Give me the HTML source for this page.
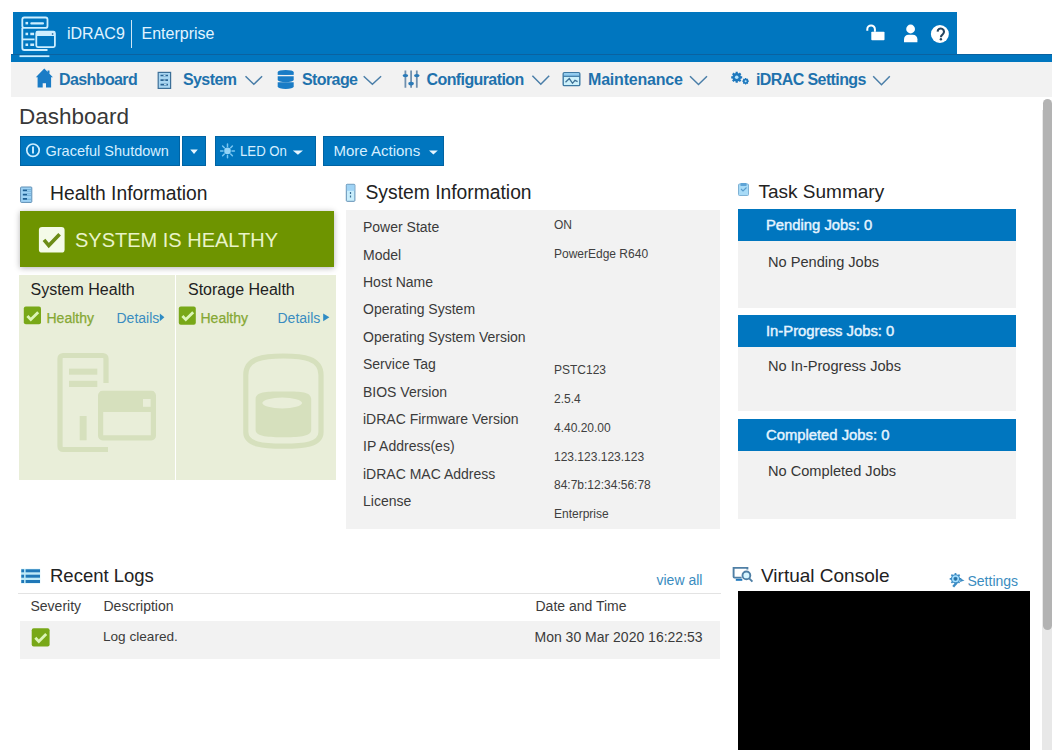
<!DOCTYPE html>
<html><head><meta charset="utf-8">
<style>
*{box-sizing:border-box}
html,body{margin:0;padding:0;width:1061px;height:754px;overflow:hidden;background:#fff;font-family:"Liberation Sans",sans-serif;color:#333}
.a{position:absolute}
.t{position:absolute;white-space:nowrap;line-height:1}
.hdr{left:13px;top:12px;width:944px;height:43px;background:#0076bf}
.strip{left:11px;top:55px;width:1041px;height:7px;background:#0076bf}
.nav{left:11px;top:62px;width:1041px;height:35px;background:#f2f2f2}
.navt{font-weight:bold;font-size:16px;letter-spacing:-0.6px;color:#1f72ad}
.btn{background:#0076bf;height:30.4px;top:136px;box-shadow:inset 0 0 0 1px rgba(0,50,90,.28)}
.btnt{color:#d6efff;font-size:14.5px}
.sect{font-size:19px;color:#222}
.lbl{font-size:14px;color:#3b3b3b}
.val{font-size:12px;color:#404040}
.jobh{background:#0076bf;height:32px;left:738px;width:278px}
.jobb{background:#f2f2f2;left:738px;width:278px}
.jobht{font-weight:normal;font-size:14.8px;-webkit-text-stroke:0.45px #e4f4ff;color:#e4f4ff;left:766px}
.jobbt{font-size:14.6px;color:#363636;left:768px}
</style></head><body>

<!-- header -->
<div class="a hdr"></div>
<div class="a strip"></div>
<div class="a" style="left:11px;top:54px;width:1041px;height:1px;background:#0a62a0"></div>
<div class="t" style="left:67px;top:25.5px;font-size:16px;color:#e2f4ff">iDRAC9</div>
<div class="a" style="left:131px;top:20px;width:1px;height:28px;background:#cfe6f5"></div>
<div class="t" style="left:141.5px;top:25.5px;font-size:16px;color:#e2f4ff">Enterprise</div>

<!-- nav -->
<div class="a nav"></div>
<div class="t navt" style="left:59px;top:72px">Dashboard</div>
<div class="t navt" style="left:183px;top:72px">System</div>
<div class="t navt" style="left:302px;top:72px">Storage</div>
<div class="t navt" style="left:426.5px;top:72px">Configuration</div>
<div class="t navt" style="left:588px;top:72px;letter-spacing:-0.2px">Maintenance</div>
<div class="t navt" style="left:756px;top:72px">iDRAC Settings</div>

<!-- scrollbar -->
<div class="a" style="left:1042px;top:110px;width:10px;height:640px;background:#e8e8e8"></div>
<div class="a" style="left:1043px;top:99px;width:9px;height:531px;background:#b3b3b3;border-radius:5px"></div>

<!-- title -->
<div class="t" style="left:19px;top:106px;font-size:22.5px;color:#383838">Dashboard</div>

<!-- buttons -->
<div class="a btn" style="left:20px;width:160px"></div>
<div class="a btn" style="left:182px;width:24px"></div>
<div class="a btn" style="left:215px;width:101px"></div>
<div class="a btn" style="left:323px;width:121px"></div>
<div class="t btnt" style="left:45.5px;top:143.7px">Graceful Shutdown</div>
<div class="t btnt" style="left:240px;top:143.5px;font-size:14.5px;transform:scaleX(0.91);transform-origin:0 0">LED On</div>
<div class="t btnt" style="left:333.5px;top:143.3px;font-size:15px">More Actions</div>

<!-- health -->
<div class="t sect" style="left:50px;top:184.3px;font-size:19.3px">Health Information</div>
<div class="a" style="left:19.5px;top:210.5px;width:314px;height:56.3px;background:#6e9400;box-shadow:0 1px 6px rgba(0,0,0,.3)"></div>
<div class="t" style="left:75px;top:230px;font-size:20px;color:#e9f3c8">SYSTEM IS HEALTHY</div>
<div class="a" style="left:19px;top:275px;width:155.8px;height:205px;background:#e9eed9"></div>
<div class="a" style="left:176px;top:275px;width:160px;height:205px;background:#e9eed9"></div>
<div class="t" style="left:30.5px;top:282px;font-size:16px;color:#222">System Health</div>
<div class="t" style="left:188px;top:282px;font-size:16px;color:#222">Storage Health</div>
<div class="t" style="left:46.5px;top:310.8px;font-size:14px;color:#86a834;-webkit-text-stroke:0.25px #86a834">Healthy</div>
<div class="t" style="left:200.5px;top:310.8px;font-size:14px;color:#86a834;-webkit-text-stroke:0.25px #86a834">Healthy</div>
<div class="t" style="left:116.5px;top:310.8px;font-size:14px;color:#3a8cc0">Details</div>
<div class="t" style="left:277.5px;top:310.8px;font-size:14px;color:#3a8cc0">Details</div>

<!-- system info -->
<div class="t sect" style="left:365.5px;top:182.8px;font-size:19.3px">System Information</div>
<div class="a" style="left:346px;top:209.5px;width:374px;height:319px;background:#f2f2f2"></div>
<div class="t lbl" style="left:363px;top:220.1px">Power State</div>
<div class="t lbl" style="left:363px;top:247.5px">Model</div>
<div class="t lbl" style="left:363px;top:274.9px">Host Name</div>
<div class="t lbl" style="left:363px;top:302.3px">Operating System</div>
<div class="t lbl" style="left:363px;top:329.7px">Operating System Version</div>
<div class="t lbl" style="left:363px;top:357.1px">Service Tag</div>
<div class="t lbl" style="left:363px;top:384.5px">BIOS Version</div>
<div class="t lbl" style="left:363px;top:411.9px">iDRAC Firmware Version</div>
<div class="t lbl" style="left:363px;top:439.3px">IP Address(es)</div>
<div class="t lbl" style="left:363px;top:466.7px">iDRAC MAC Address</div>
<div class="t lbl" style="left:363px;top:494.1px">License</div>
<div class="t val" style="left:554px;top:219.3px">ON</div>
<div class="t val" style="left:554px;top:248.2px">PowerEdge R640</div>
<div class="t val" style="left:554px;top:363.8px">PSTC123</div>
<div class="t val" style="left:554px;top:392.7px">2.5.4</div>
<div class="t val" style="left:554px;top:421.6px">4.40.20.00</div>
<div class="t val" style="left:554px;top:450.5px">123.123.123.123</div>
<div class="t val" style="left:554px;top:479.4px">84:7b:12:34:56:78</div>
<div class="t val" style="left:554px;top:508.3px">Enterprise</div>

<!-- task summary -->
<div class="t sect" style="left:758.5px;top:182.3px">Task Summary</div>
<div class="a jobh" style="top:209px"></div>
<div class="a jobb" style="top:241px;height:67px"></div>
<div class="a jobh" style="top:315px"></div>
<div class="a jobb" style="top:347px;height:64px"></div>
<div class="a jobh" style="top:419px"></div>
<div class="a jobb" style="top:451px;height:67.8px"></div>
<div class="t jobht" style="top:218.3px">Pending Jobs: 0</div>
<div class="t jobbt" style="top:254.5px">No Pending Jobs</div>
<div class="t jobht" style="top:323.7px">In-Progress Jobs: 0</div>
<div class="t jobbt" style="top:359px">No In-Progress Jobs</div>
<div class="t jobht" style="top:428px">Completed Jobs: 0</div>
<div class="t jobbt" style="top:464px">No Completed Jobs</div>

<!-- recent logs -->
<div class="t sect" style="left:50px;top:567px;font-size:18.5px">Recent Logs</div>
<div class="t" style="left:656.5px;top:573px;font-size:14px;color:#3a8cc0">view all</div>
<div class="a" style="left:18px;top:593px;width:703px;height:1px;background:#e3e3e3"></div>
<div class="t lbl" style="left:30.5px;top:598.8px">Severity</div>
<div class="t lbl" style="left:103.5px;top:598.8px">Description</div>
<div class="t lbl" style="left:535.5px;top:598.8px">Date and Time</div>
<div class="a" style="left:20px;top:621px;width:700px;height:38px;background:#f2f2f2"></div>
<div class="t lbl" style="left:103px;top:629.5px;font-size:13.6px">Log cleared.</div>
<div class="t lbl" style="left:534.5px;top:629.5px">Mon 30 Mar 2020 16:22:53</div>

<!-- virtual console -->
<div class="t sect" style="left:761px;top:566px">Virtual Console</div>
<div class="t" style="left:967.5px;top:574px;font-size:14px;color:#3a8cc0">Settings</div>
<div class="a" style="left:738px;top:591px;width:291.5px;height:159px;background:#000"></div>

<!-- ICONS -->
<svg class="a" style="left:0;top:0" width="1061" height="754" viewBox="0 0 1061 754">
<!-- header logo -->
<g fill="none" stroke="#cdeeff" stroke-width="1.8">
  <rect x="22.3" y="17.5" width="25.2" height="10.4" rx="2"/>
  <path d="M22.3 27.9 V48 a2 2 0 0 0 2 2 H47.5"/>
  <path d="M22.3 39.4 H34.5"/>
  <rect x="36.3" y="31.7" width="18.6" height="15.4" rx="1.5"/>
  <path d="M19.5 56.2 H49.4"/>
</g>
<g fill="#cdeeff">
  <rect x="25.5" y="21.9" width="2.6" height="2.5"/>
  <rect x="30.3" y="22.2" width="13.7" height="2.2" rx="1"/>
  <rect x="25.5" y="32.7" width="2.6" height="2.5"/>
  <rect x="30.3" y="32.7" width="3.8" height="2.5"/>
  <rect x="25.5" y="43.5" width="2.6" height="2.5"/>
  <rect x="30.3" y="43.5" width="3.8" height="2.5"/>
  <rect x="36.3" y="31.7" width="18.6" height="4.3"/>
</g>
<circle cx="52.6" cy="34" r="0.9" fill="#3a7ab0"/>
<!-- header right icons -->
<g fill="#fff">
  <path d="M867.3 30.8 v-1.6 a3.8 3.8 0 0 1 7.6 0 v2.6" fill="none" stroke="#fff" stroke-width="2"/>
  <rect x="871.3" y="31.8" width="13.2" height="8.4" rx="0.8"/>
  <circle cx="910.6" cy="29" r="4.4"/>
  <path d="M904 42.2 v-3 a4.5 4.5 0 0 1 4.5 -4.5 h4.4 a4.5 4.5 0 0 1 4.5 4.5 v3 z"/>
  <circle cx="939.9" cy="34" r="9"/>
</g>
<path d="M937.6 31.6 a3.2 3.2 0 1 1 5.2 2.6 c-1.3 1 -1.9 1.5 -1.9 3" fill="none" stroke="#24445f" stroke-width="2.1"/><circle cx="940.9" cy="39.3" r="1.2" fill="#24445f"/>
<!-- nav icons -->
<path d="M44.3 68.5 L35.8 77.3 L37.6 77.3 L37.6 87.4 L42.7 87.4 L42.7 83.3 L46 83.3 L46 87.4 L51.1 87.4 L51.1 77.3 L52.9 77.3 Z" fill="#1a7cc6"/>
<path d="M48.5 70.5 v3" stroke="#1a7cc6" stroke-width="2"/>
<rect x="158.2" y="72.4" width="12.4" height="16" fill="#a9d6f2" stroke="#3c6f98" stroke-width="1.2"/>
<g stroke="#2a6494" stroke-width="1.6"><path d="M160.5 75.5 H168 M160.5 80.1 H168 M160.5 84.6 H168"/></g>
<g stroke="#d6f0ff" stroke-width="0.9"><path d="M163.5 75.5 H165.5 M163.5 80.1 H165.5 M164 84.6 H166.5"/></g>
<g fill="#1a7cc6">
  <ellipse cx="285.7" cy="72.3" rx="8" ry="2.4"/>
  <rect x="277.7" y="72.3" width="16" height="2.6"/>
  <path d="M277.7 76.2 h16 v3.8 a8 2.2 0 0 1 -16 0 z"/>
  <path d="M277.7 82.2 h16 v4.4 a8 2.3 0 0 1 -16 0 z"/>
</g>
<g stroke="#6f8fae" stroke-width="1.8"><path d="M405.4 70.5 V87.7 M411.1 70.5 V87.7 M416.8 70.5 V87.7"/></g>
<g fill="#2a7ab8"><ellipse cx="405.4" cy="75.6" rx="2.8" ry="1.7"/><ellipse cx="416.8" cy="75.6" rx="2.8" ry="1.7"/><ellipse cx="411.1" cy="83.6" rx="2.8" ry="1.9"/></g>
<rect x="563.2" y="72.6" width="16.6" height="13" rx="1.2" fill="#cdf1fb" stroke="#3d79a3" stroke-width="1.4"/>
<rect x="563.9" y="73.3" width="15.2" height="3" fill="#8fcaf0"/>
<path d="M563.2 76.3 H579.8" stroke="#3d79a3" stroke-width="1.2"/>
<path d="M565.5 82.2 L569.3 78.6 L572.5 83.3 L575 80.4 L577.6 81.6" fill="none" stroke="#3d6f95" stroke-width="1.3"/>
<g fill="#1f78bd">
  <circle cx="736.7" cy="77.3" r="4.3"/>
  <path d="M736.7 71.8 v11 M731.2 77.3 h11 M732.8 73.4 l7.8 7.8 M740.6 73.4 l-7.8 7.8" stroke="#1f78bd" stroke-width="2.2"/>
  <circle cx="745.6" cy="81.2" r="2.6"/>
  <path d="M745.6 77.9 v6.6 M742.3 81.2 h6.6 M743.3 78.9 l4.6 4.6 M747.9 78.9 l-4.6 4.6" stroke="#1f78bd" stroke-width="1.2"/>
</g>
<circle cx="736.7" cy="77.3" r="1.8" fill="#b8e6ff"/>
<circle cx="745.6" cy="81.2" r="1" fill="#b8e6ff"/>
<!-- chevrons -->
<g fill="none" stroke="#4a7ea8" stroke-width="1.5">
  <path d="M245.5 76.3 L253.8 84.3 L262.1 76.3"/>
  <path d="M363.7 76.3 L372.4 84.3 L381.1 76.3"/>
  <path d="M532.4 75.8 L540.8 84.3 L549.2 75.8"/>
  <path d="M690 76.3 L698.5 84.5 L707 76.3"/>
  <path d="M873.2 76.3 L881.5 84.7 L889.8 76.3"/>
</g>
<!-- button icons -->
<circle cx="33" cy="150.2" r="6.2" fill="none" stroke="#cdeeff" stroke-width="1.7"/>
<path d="M33 146.6 V153.4" stroke="#cdeeff" stroke-width="1.9"/>
<path d="M190.3 149.6 H197.8 L194 154 Z" fill="#e6f5ff"/>
<path d="M232.00 150.90 L234.40 150.90 M230.68 154.08 L232.38 155.78 M227.50 155.40 L227.50 157.80 M224.32 154.08 L222.62 155.78 M223.00 150.90 L220.60 150.90 M224.32 147.72 L222.62 146.02 M227.50 146.40 L227.50 144.00 M230.68 147.72 L232.38 146.02" stroke="#78c6f2" stroke-width="1.5" stroke-linecap="round"/>
<circle cx="227.5" cy="150.9" r="3.3" fill="#94d4f7"/>
<path d="M292.8 150.4 H303 L297.9 154.8 Z" fill="#e6f5ff"/>
<path d="M429 150.4 H437.8 L433.4 154.6 Z" fill="#e6f5ff"/>
<!-- section icons -->
<rect x="20.6" y="187" width="11.2" height="15.4" rx="0.8" fill="#9fd3f5" stroke="#5f8fb5" stroke-width="1"/>
<g stroke="#1d5e92" stroke-width="1.8"><path d="M22.8 190.3 H31 M22.8 194.6 H31 M22.8 198.8 H31"/></g>
<g stroke="#8fcaf0" stroke-width="1.8"><path d="M27 190.3 H31 M27 194.6 H31 M27 198.8 H31"/></g>
<rect x="346.3" y="184.3" width="8.6" height="17" rx="0.8" fill="#c9eefc" stroke="#5f8fb5" stroke-width="1"/>
<rect x="346.8" y="184.8" width="7.6" height="6" fill="#9fd3f5"/>
<path d="M350.5 192 V199" stroke="#3a6f95" stroke-width="1.2" stroke-dasharray="2 1.5"/>
<rect x="738.5" y="184" width="10" height="11.5" rx="1" fill="#a8dbf7" stroke="#7fb2d5" stroke-width="1"/>
<rect x="740.5" y="183" width="6" height="3" fill="#5fa4d6"/>
<path d="M741 189 l2 2 l3.5 -3.5" fill="none" stroke="#5a9ccc" stroke-width="1.1"/>
<rect x="21" y="568.8" width="19.2" height="14.6" fill="#bfeaf8"/>
<g fill="#1f78b8">
  <rect x="21.3" y="569.3" width="2.8" height="3"/>
  <rect x="21.3" y="574.7" width="2.8" height="3"/>
  <rect x="21.3" y="580" width="2.8" height="3"/>
  <rect x="25.6" y="569.3" width="14.4" height="3"/>
  <rect x="25.6" y="574.7" width="14.4" height="3"/>
  <rect x="25.6" y="580" width="14.4" height="3"/>
</g>
<g fill="none" stroke="#4f7fa5" stroke-width="1.9">
  <path d="M747.4 569.6 V567.9 H733.6 V576.8 a0.8 0.8 0 0 0 0.8 0.8 H741.6"/>
  <circle cx="746.4" cy="575.4" r="3.9" fill="#d6f5ff"/>
  <path d="M749.2 578.3 L752.4 581.6"/>
</g>
<path d="M735.8 579.8 H742.3" stroke="#1f78bd" stroke-width="2"/>
<g fill="#3d8cc4">
  <circle cx="955.5" cy="578.8" r="4.6"/>
  <path d="M955.5 573 v11.6 M949.7 578.8 h11.6 M951.4 574.7 l8.2 8.2 M959.6 574.7 l-8.2 8.2" stroke="#3d8cc4" stroke-width="1.7"/>
  <path d="M957.2 582 L953.2 586.8" stroke="#3d8cc4" stroke-width="2.4"/>
  <path d="M960.5 578.5 L964.5 580.5 L960 582 Z"/>
</g>
<circle cx="955.5" cy="578.8" r="2.8" fill="none" stroke="#a6e0ff" stroke-width="1.4"/>
<circle cx="955.5" cy="578.8" r="1.4" fill="#2a6f9f"/>
<!-- big check -->
<rect x="38.9" y="226.9" width="25.7" height="25.7" rx="3.2" fill="#f4fbe8"/>
<path d="M44 239.8 L48.8 245.6 L59.6 234.2" fill="none" stroke="#6b8c16" stroke-width="3.6"/>
<!-- small checks -->
<g>
  <rect x="23.8" y="306.5" width="17.2" height="17.8" rx="2" fill="#78a818"/>
  <path d="M27.4 316 L30.8 319.6 L38.2 312.2" fill="none" stroke="#dcf5b8" stroke-width="2.8"/>
  <rect x="178.8" y="306.5" width="17" height="18.2" rx="2" fill="#78a818"/>
  <path d="M182.4 316 L185.8 319.6 L193.2 312.2" fill="none" stroke="#dcf5b8" stroke-width="2.8"/>
  <rect x="31.7" y="628.2" width="17.9" height="18.2" rx="2" fill="#78a818"/>
  <path d="M35.3 637.8 L38.8 641.4 L46.2 634" fill="none" stroke="#dcf5b8" stroke-width="2.8"/>
</g>
<!-- details arrows -->
<path d="M159.8 313.4 L164.4 317.3 L159.8 321.2 Z" fill="#2f8cc4"/>
<path d="M323.2 313.4 L329.4 317.3 L323.2 321.2 Z" fill="#2f8cc4"/>
<!-- faded panel icons -->
<g fill="none" stroke="#d6e0bd" stroke-width="5.2">
  <path d="M106 383 V358.5 a3 3 0 0 0 -3 -3 H63 a3 3 0 0 0 -3 3 V446.5 a3 3 0 0 0 3 3 H108"/>
  <rect x="100.6" y="393.4" width="52.8" height="44.4" rx="2"/>
  <path d="M245.8 375 C245.8 358 264 356 283.4 356 C303 356 321 358 321 375 V432 C321 445 303 446.2 283.4 446.2 C264 446.2 245.8 445 245.8 432 Z"/>
</g>
<g fill="#d6e0bd">
  <rect x="69" y="368.6" width="28.3" height="6.1"/>
  <rect x="69" y="380.8" width="28.3" height="6.2"/>
  <rect x="79.7" y="416" width="6.9" height="24.3"/>
  <rect x="100.6" y="391" width="52.8" height="21"/>
  <path d="M255.6 399 C255.6 391 270 391.5 283.4 391.5 C297 391.5 311.2 391 311.2 399 V430 C311.2 437 297 437.2 283.4 437.2 C270 437.2 255.6 437 255.6 430 Z"/>
</g>
<rect x="143" y="399" width="7.6" height="7.8" fill="#e9eed9"/>
<ellipse cx="282.2" cy="403" rx="19.8" ry="5.4" fill="#e9eed9"/>
</svg>

<!-- /ICONS -->
</body></html>
